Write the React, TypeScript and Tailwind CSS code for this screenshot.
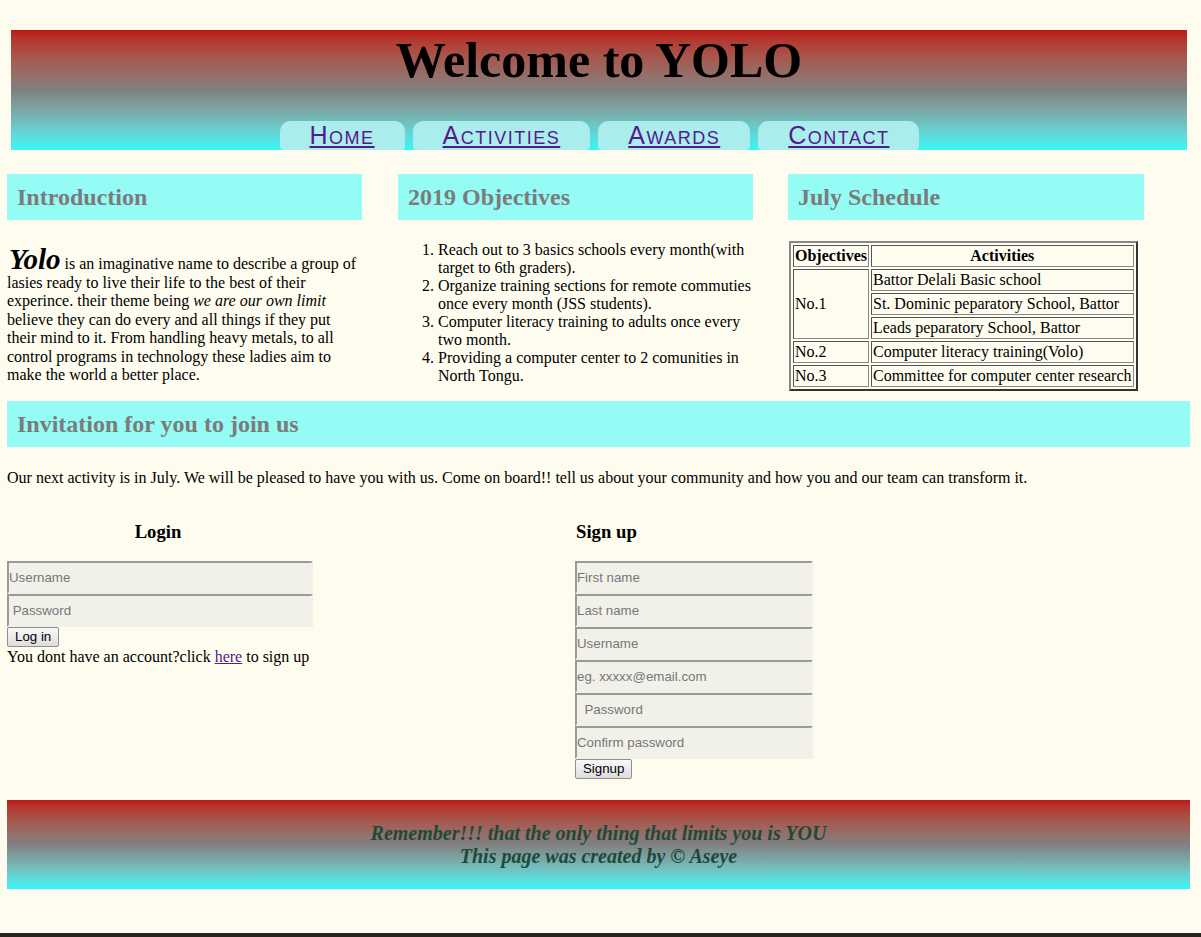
import React from "react";

/* YOLO landing page — header, three info columns, invitation, forms, footer */

const serif = "font-['Liberation_Serif','Times_New_Roman',serif]";
const sans = "font-['Liberation_Sans',Arial,sans-serif]";

const NAV = ["Home", "Activities", "Awards", "Contact"];

const OBJECTIVES = [
  "Reach out to 3 basics schools every month(with target to 6th graders).",
  "Organize training sections for remote commuties once every month (JSS students).",
  "Computer literacy training to adults once every two month.",
  "Providing a computer center to 2 comunities in North Tongu.",
];

function SectionTitle({ children, className = "" }: { children: React.ReactNode; className?: string }) {
  return (
    <div className={`h-[46px] flex items-center pl-[10px] bg-[#95fcf5] ${className}`}>
      <h2 className="text-[24px] font-bold text-[#7b7b7b] leading-none">{children}</h2>
    </div>
  );
}

function Field({ placeholder, w }: { placeholder: string; w: string }) {
  return (
    <input
      placeholder={placeholder}
      className={`${w} h-[33px] block bg-[#f1f1ea] border-2 border-t-[#9a9a9a] border-l-[#9a9a9a] border-b-[#f1f1ea] border-r-[#f1f1ea] px-0 text-[13.3px] ${sans} placeholder:text-[#777] outline-none`}
    />
  );
}

function Btn({ children }: { children: React.ReactNode }) {
  return (
    <button className={`block h-[20px] px-[7px] text-[13.3px] leading-none text-black ${sans} border border-[#8f8f8f] rounded-[2px] bg-gradient-to-b from-[#f8f8f8] to-[#dddddd]`}>
      {children}
    </button>
  );
}

function Cell({ children, className = "", rowSpan }: { children: React.ReactNode; className?: string; rowSpan?: number }) {
  return (
    <td
      rowSpan={rowSpan}
      className={`border border-t-[#555] border-l-[#555] border-b-[#888] border-r-[#888] px-[1px] h-[22px] leading-[20px] whitespace-nowrap ${className}`}
    >
      {children}
    </td>
  );
}

export default function App() {
  return (
    <div className={`h-[937px] overflow-hidden flex flex-col bg-[#fefcef] text-black ${serif}`}>
      <div className="w-[1190px] pl-[7px]">
        {/* ── Header ── */}
        <header className="mt-[30px] ml-[4px] w-[1176px] h-[120px] flex flex-col bg-gradient-to-b from-[#bb1616] via-[#808080] to-[#2ff8f8]">
          <h1 className="text-[50px] font-bold text-center leading-none mt-[5px]">Welcome to YOLO</h1>
          <nav className="mt-auto flex justify-center gap-[8px] pl-[1px]">
            {NAV.map(n => (
              <a
                key={n}
                href="#"
                className={`h-[29px] px-[30px] flex items-center rounded-t-[10px] rounded-b-[4px] bg-[#a9eded] text-[#551a8b] underline text-[25px] tracking-[1.5px] [font-variant:small-caps] ${sans} leading-none`}
              >
                {n}
              </a>
            ))}
          </nav>
        </header>

        {/* ── Three columns ── */}
        <div className="mt-[24px] flex items-start">
          <div className="w-[355px]">
            <SectionTitle>Introduction</SectionTitle>
            <p className="mt-[25px] text-[16px] leading-[18.4px]">
              <span className="text-[29px] font-bold italic leading-none pl-[2px]">Yolo</span> is an imaginative name to describe a group of
              lasies ready to live their life to the best of their experince. their theme being <i>we are our own limit</i> believe
              they can do every and all things if they put their mind to it. From handling heavy metals, to all control programs in
              technology these ladies aim to make the world a better place.
            </p>
          </div>

          <div className="w-[355px] ml-[36px]">
            <SectionTitle>2019 Objectives</SectionTitle>
            <ol className="mt-[21px] pl-[40px] list-decimal text-[16px] leading-[18px]">
              {OBJECTIVES.map(o => (
                <li key={o}>{o}</li>
              ))}
            </ol>
          </div>

          <div className="w-[356px] ml-[35px]">
            <SectionTitle>July Schedule</SectionTitle>
            <table className="mt-[21px] ml-[1px] border-separate border-spacing-[2px] border-[2px] border-t-[#888] border-l-[#888] border-b-[#333] border-r-[#333] text-[16px]">
              <tbody>
                <tr>
                  <Cell className="font-bold text-center">Objectives</Cell>
                  <Cell className="font-bold text-center">Activities</Cell>
                </tr>
                <tr>
                  <Cell rowSpan={3}>No.1</Cell>
                  <Cell>Battor Delali Basic school</Cell>
                </tr>
                <tr>
                  <Cell>St. Dominic peparatory School, Battor</Cell>
                </tr>
                <tr>
                  <Cell>Leads peparatory School, Battor</Cell>
                </tr>
                <tr>
                  <Cell>No.2</Cell>
                  <Cell>Computer literacy training(Volo)</Cell>
                </tr>
                <tr>
                  <Cell>No.3</Cell>
                  <Cell>Committee for computer center research</Cell>
                </tr>
              </tbody>
            </table>
          </div>
        </div>

        {/* ── Invitation ── */}
        <SectionTitle className="mt-[10px] w-[1183px]">Invitation for you to join us</SectionTitle>
        <p className="mt-[22px] text-[16px] leading-[18px]">
          Our next activity is in July. We will be pleased to have you with us. Come on board!! tell us about your community and how you and our team can transform it.
        </p>

        {/* ── Forms ── */}
        <div className="mt-[34px] flex items-start">
          <div className="w-[568px]">
            <h3 className="w-[302px] text-center text-[18.7px] font-bold leading-[22px]">Login</h3>
            <div className="mt-[18px]">
              <Field placeholder="Username" w="w-[306px]" />
              <Field placeholder=" Password" w="w-[306px]" />
              <Btn>Log in</Btn>
              <p className="text-[16px] leading-[18px] mt-[1px]">
                You dont have an account?click <a href="#" className="text-[#551a8b] underline">here</a> to sign up
              </p>
            </div>
          </div>
          <div>
            <h3 className="pl-[1px] text-[18.7px] font-bold leading-[22px]">Sign up</h3>
            <div className="mt-[18px]">
              <Field placeholder="First name" w="w-[238px]" />
              <Field placeholder="Last name" w="w-[238px]" />
              <Field placeholder="Username" w="w-[238px]" />
              <Field placeholder="eg. xxxxx@email.com" w="w-[238px]" />
              <Field placeholder="  Password" w="w-[238px]" />
              <Field placeholder="Confirm password" w="w-[238px]" />
              <Btn>Signup</Btn>
            </div>
          </div>
        </div>

        {/* ── Footer ── */}
        <footer className="mt-[21px] w-[1183px] h-[89px] flex flex-col items-center justify-center bg-gradient-to-b from-[#bb1616] via-[#808080] to-[#2ff8f8] text-[#1c4a3a] italic font-bold text-[20px] leading-[23px]">
          <span>Remember!!! that the only thing that limits you is YOU</span>
          <span>This page was created by © Aseye</span>
        </footer>
      </div>
      <div className="flex-1" />
      <div className="h-[4px] bg-[#2a241e]" />
    </div>
  );
}
